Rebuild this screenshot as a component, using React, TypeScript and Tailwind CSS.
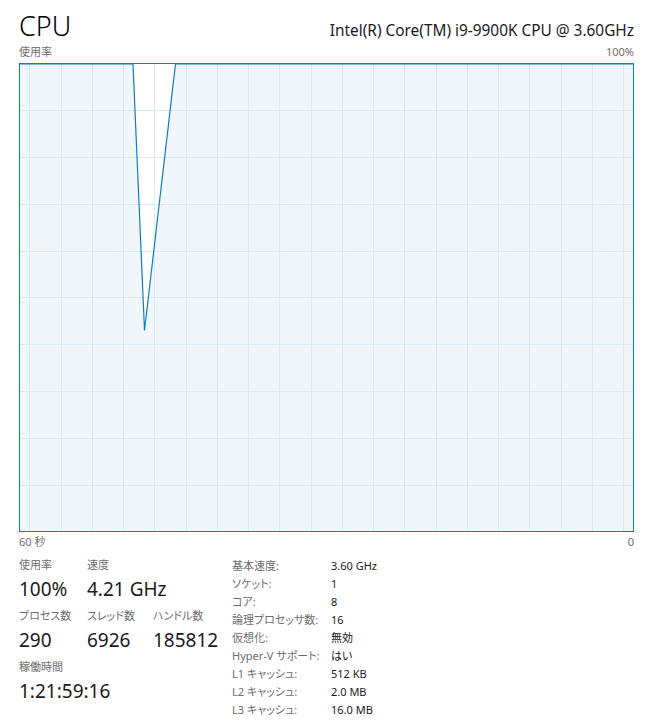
import React from "react";

const vx = Array.from({ length: 20 }, (_, k) => Math.round(9.3 + k * 31.26) + 0.5);
const hy = [46, 93, 140, 187, 233, 280, 327, 374, 421].map((v) => v + 0.5);

function Chart() {
  return (
    <div className="w-[615px] h-[469px] border border-[#117dbb] bg-white">
      <svg width="613" height="467" viewBox="0 0 613 467" className="block">
        <rect x="0" y="0" width="613" height="467" fill="#f1f6fa" />
        <polygon points="113,0 124.5,266.5 155.5,0" fill="#ffffff" />
        {vx.map((x) => (
          <line key={"v" + x} x1={x} y1={0} x2={x} y2={467} stroke="#d9eaf4" strokeWidth={1} />
        ))}
        {hy.map((y) => (
          <line key={"h" + y} x1={0} y1={y} x2={613} y2={y} stroke="#d9eaf4" strokeWidth={1} />
        ))}
        <polyline
          points="0,0 113,0 124.5,266.5 155.5,0 613,0"
          fill="none"
          stroke="#117dbb"
          strokeWidth={1.2}
        />
      </svg>
    </div>
  );
}

function Stat({ label, value, className = "" }: { label: string; value: string; className?: string }) {
  return (
    <div className={"flex flex-col " + className}>
      <div className="h-[16px] text-[11px] leading-[16px] text-[#6d6d6d] whitespace-nowrap">{label}</div>
      <div className="mt-[4px] h-[24px] text-[19px] leading-[24px] text-[#1a1a1a] whitespace-nowrap">{value}</div>
    </div>
  );
}

const specs: [string, string][] = [
  ["基本速度:", "3.60 GHz"],
  ["ソケット:", "1"],
  ["コア:", "8"],
  ["論理プロセッサ数:", "16"],
  ["仮想化:", "無効"],
  ["Hyper-V サポート:", "はい"],
  ["L1 キャッシュ:", "512 KB"],
  ["L2 キャッシュ:", "2.0 MB"],
  ["L3 キャッシュ:", "16.0 MB"],
];

export default function App() {
  return (
    <div className="w-[651px] h-[725px] bg-white pl-[19px] pr-[17px] font-['Noto_Sans','Noto_Sans_CJK_JP',sans-serif] [font-feature-settings:'palt'] overflow-hidden">
      <div className="pt-[12px] h-[44px] flex items-baseline justify-between">
        <div className="text-[27px] leading-[27px] font-light text-black">CPU</div>
        <div className="text-[15.4px] leading-[20px] text-[#1a1a1a]">Intel(R) Core(TM) i9-9900K CPU @ 3.60GHz</div>
      </div>
      <div className="h-[16px] flex justify-between text-[11px] leading-[16px] text-[#6d6d6d]">
        <span>使用率</span>
        <span>100%</span>
      </div>
      <div className="mt-[3px]">
        <Chart />
      </div>
      <div className="mt-[2px] h-[16px] flex justify-between text-[11px] leading-[16px] text-[#6d6d6d]">
        <span>60 秒</span>
        <span>0</span>
      </div>
      <div className="mt-[7px] flex items-start">
        <div className="w-[213px] grid grid-cols-[68px_66px_79px] gap-y-[7px]">
          <Stat label="使用率" value="100%" />
          <Stat label="速度" value="4.21 GHz" className="col-span-2" />
          <Stat label="プロセス数" value="290" />
          <Stat label="スレッド数" value="6926" />
          <Stat label="ハンドル数" value="185812" />
          <Stat label="稼働時間" value="1:21:59:16" className="col-span-3" />
        </div>
        <div className="flex flex-col">
          {specs.map(([k, v]) => (
            <div key={k} className="h-[18px] flex text-[11px] leading-[18px] whitespace-nowrap">
              <div className="w-[99px] text-[#6d6d6d]">{k}</div>
              <div className="text-[#1a1a1a]">{v}</div>
            </div>
          ))}
        </div>
      </div>
    </div>
  );
}
